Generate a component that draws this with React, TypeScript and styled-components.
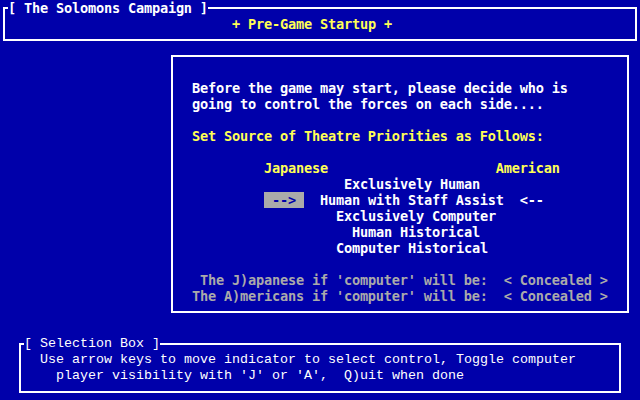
import React from "react";
import styled, { createGlobalStyle, css } from "styled-components";

const BLUE = "#0000AA";
const WHITE = "#FFFFFF";
const YELLOW = "#FFFF55";
const GRAY = "#AAAAAA";

const GlobalStyle = createGlobalStyle`
  html, body { margin: 0; padding: 0; background: ${BLUE}; }
`;

const Screen = styled.main`
  width: 640px;
  height: 400px;
  overflow: hidden;
  background: ${BLUE};
  color: ${WHITE};
  display: flex;
  flex-direction: column;
  font-family: "DejaVu Sans Mono", "Liberation Mono", monospace;
  font-weight: bold;
  font-size: 13.6px;
  letter-spacing: -0.19px;
  line-height: 16px;
`;

const lightFont = css`
  font-family: "Liberation Mono", "DejaVu Sans Mono", monospace;
  font-weight: normal;
  font-size: 13.33px;
  letter-spacing: 0;
`;

const Frame = styled.section<{ $top: number; $left: number; $right: number }>`
  box-sizing: border-box;
  margin: ${(p) => p.$top}px ${(p) => p.$right}px 0 ${(p) => p.$left}px;
  border: 2px solid ${WHITE};
  border-top: none;
  padding: 0 0 7px 0;
  display: flex;
  flex-direction: column;
`;

const FrameHeader = styled.header`
  display: flex;
  align-items: center;
  height: 16px;
  margin: -7px -2px 0 -2px;
`;

const Rule = styled.span<{ $grow?: boolean }>`
  display: block;
  height: 2px;
  background: ${WHITE};
  ${(p) => (p.$grow ? css`flex: 1;` : css`width: 5px;`)}
`;

const Legend = styled.span<{ $light?: boolean }>`
  white-space: pre;
  color: ${WHITE};
  ${(p) => p.$light && lightFont}
`;

const FrameBody = styled.div<{ $pad: number }>`
  display: flex;
  flex-direction: column;
  padding-left: ${(p) => p.$pad}px;
`;

const Panel = styled.section`
  box-sizing: border-box;
  margin: 14px 0 0 171px;
  width: 458px;
  height: 258px;
  border: 2px solid ${WHITE};
  padding: 23px 0 0 19px;
  display: flex;
  flex-direction: column;
`;

type Tone = "white" | "yellow" | "gray";
const toneColor: Record<Tone, string> = { white: WHITE, yellow: YELLOW, gray: GRAY };

const Line = styled.div<{ $indent?: number; $tone?: Tone; $light?: boolean }>`
  height: 16px;
  white-space: pre;
  padding-left: ${(p) => (p.$indent ?? 0) * 8}px;
  color: ${(p) => toneColor[p.$tone ?? "white"]};
  ${(p) => p.$light && lightFont}
`;

const Marker = styled.span`
  background: ${GRAY};
  color: ${BLUE};
`;

export default function App() {
  return (
    <>
      <GlobalStyle />
      <Screen>
        <Frame $top={7} $left={3} $right={3}>
          <FrameHeader>
            <Rule />
            <Legend>[ The Solomons Campaign ]</Legend>
            <Rule $grow />
          </FrameHeader>
          <FrameBody $pad={227}>
            <Line $tone="yellow">+ Pre-Game Startup +</Line>
          </FrameBody>
        </Frame>

        <Panel>
          <Line>Before the game may start, please decide who is</Line>
          <Line>going to control the forces on each side....</Line>
          <Line />
          <Line $tone="yellow">Set Source of Theatre Priorities as Follows:</Line>
          <Line />
          <Line $indent={9} $tone="yellow">{"Japanese                     American"}</Line>
          <Line $indent={19}>Exclusively Human</Line>
          <Line $indent={9}>
            <Marker>{" --> "}</Marker>
            {"  Human with Staff Assist  <--"}
          </Line>
          <Line $indent={18}>Exclusively Computer</Line>
          <Line $indent={20}>Human Historical</Line>
          <Line $indent={18}>Computer Historical</Line>
          <Line />
          <Line $indent={1} $tone="gray">{"The J)apanese if 'computer' will be:  < Concealed >"}</Line>
          <Line $tone="gray">{"The A)mericans if 'computer' will be:  < Concealed >"}</Line>
        </Panel>

        <Frame $top={30} $left={19} $right={19}>
          <FrameHeader>
            <Rule />
            <Legend $light>[ Selection Box ]</Legend>
            <Rule $grow />
          </FrameHeader>
          <FrameBody $pad={19}>
            <Line $light>Use arrow keys to move indicator to select control, Toggle computer</Line>
            <Line $light $indent={2}>{"player visibility with 'J' or 'A',  Q)uit when done"}</Line>
          </FrameBody>
        </Frame>
      </Screen>
    </>
  );
}
